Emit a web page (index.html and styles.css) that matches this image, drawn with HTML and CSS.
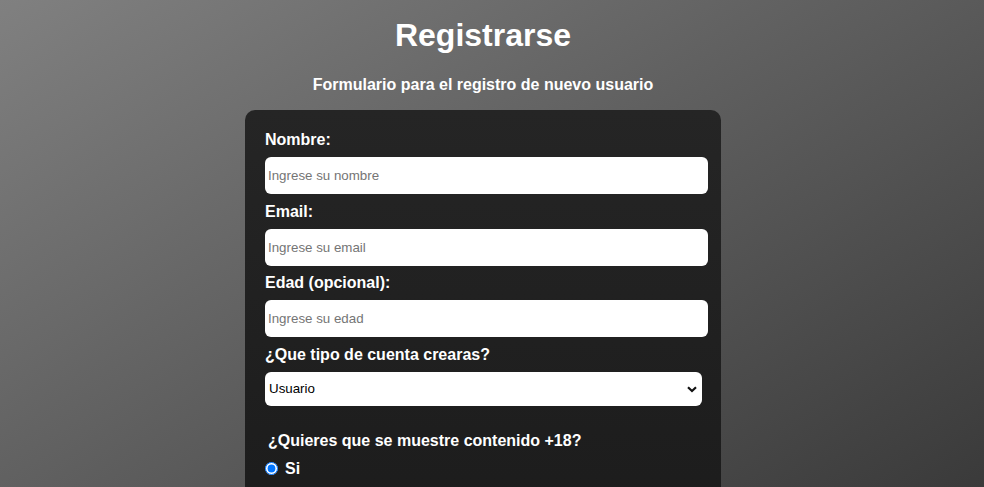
FILE: index.html
```html
<!DOCTYPE html>
<html lang="es">
<head>
<meta charset="utf-8">
<title>Registrarse</title>
<link rel="stylesheet" href="styles.css">
</head>
<body>
<div class="page">
  <h1 class="title">Registrarse</h1>
  <p class="subtitle">Formulario para el registro de nuevo usuario</p>
  <form class="card">
    <label class="label" for="nombre">Nombre:</label>
    <input class="field" id="nombre" type="text" placeholder="Ingrese su nombre">
    <label class="label" for="email">Email:</label>
    <input class="field" id="email" type="email" placeholder="Ingrese su email">
    <label class="label" for="edad">Edad (opcional):</label>
    <input class="field" id="edad" type="number" placeholder="Ingrese su edad">
    <label class="label" for="tipo">¿Que tipo de cuenta crearas?</label>
    <div class="select-wrap">
      <select class="select" id="tipo">
        <option>Usuario</option>
        <option>Administrador</option>
      </select>
      <svg class="chevron" width="10" height="7" viewBox="0 0 10 7"><path d="M1 1.2 L5 5 L9 1.2" fill="none" stroke="#111" stroke-width="2.2"/></svg>
    </div>
    <p class="question">¿Quieres que se muestre contenido +18?</p>
    <label class="radio-row"><input class="radio" type="radio" name="adult" checked><span>Si</span></label>
  </form>
</div>
</body>
</html>
```
FILE: styles.css
```css
html, body {
  margin: 0;
  padding: 0;
  overflow: hidden;
  height: 487px;
}
body {
  font-family: "Liberation Sans", Arial, sans-serif;
  color: #fff;
}
.page {
  box-sizing: border-box;
  height: 597px;
  padding: 17px 18px 0 0;
  background: linear-gradient(to bottom right, #808080, #333333);
  display: flex;
  flex-direction: column;
  align-items: center;
}
.title {
  margin: 0;
  font-size: 32px;
  line-height: 37px;
  font-weight: bold;
}
.subtitle {
  margin: 22px 0 0;
  font-size: 16px;
  line-height: 18px;
  font-weight: bold;
}
.card {
  box-sizing: border-box;
  width: 476px;
  margin-top: 16px;
  padding: 21px 13px 24px 20px;
  border-radius: 10px;
  background: linear-gradient(180deg, #252525 0%, #1b1b1b 100%);
  display: flex;
  flex-direction: column;
  align-items: flex-start;
  min-height: 460px;
}
.label {
  display: block;
  font-size: 16px;
  line-height: normal;
  font-weight: bold;
  margin-bottom: 8px;
}
.field {
  box-sizing: border-box;
  width: 443px;
  height: 37px;
  border: none;
  border-radius: 6px;
  padding: 0 3px;
  margin: 0 0 8.6px;
  background: #fff;
  font-family: "Liberation Sans", Arial, sans-serif;
  font-size: 13.333px;
  color: #000;
  outline: none;
}
.field::placeholder {
  color: #757575;
}
.field::-webkit-outer-spin-button,
.field::-webkit-inner-spin-button {
  -webkit-appearance: none;
  margin: 0;
}
.select-wrap {
  position: relative;
  width: 437px;
  height: 34px;
}
.select {
  box-sizing: border-box;
  width: 437px;
  height: 34px;
  border: none;
  border-radius: 6px;
  padding: 0 4px;
  background: #fff;
  color: #000;
  font-family: "Liberation Sans", Arial, sans-serif;
  font-size: 13.333px;
  -webkit-appearance: none;
  appearance: none;
  outline: none;
}
.chevron {
  position: absolute;
  right: 5px;
  top: 14px;
  pointer-events: none;
}
.question {
  margin: 26px 0 10px 3px;
  font-size: 16px;
  line-height: 18px;
  font-weight: bold;
}
.radio-row {
  display: flex;
  align-items: center;
  gap: 7px;
  font-size: 16px;
  line-height: 18px;
  font-weight: bold;
}
.radio {
  width: 13px;
  height: 13px;
  margin: 0;
}
```
